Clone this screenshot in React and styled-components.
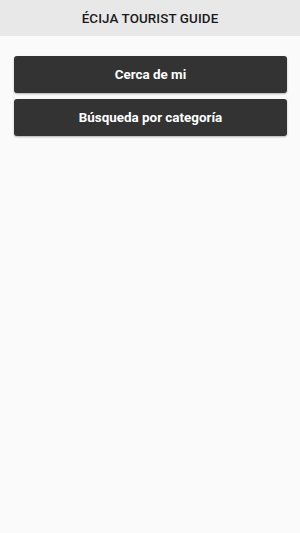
import styled, { createGlobalStyle } from "styled-components";

const GlobalStyle = createGlobalStyle`
  html, body {
    margin: 0;
    padding: 0;
    background: #fafafa;
    font-family: Roboto, "Liberation Sans", sans-serif;
  }
`;

const App = () => {
  return (
    <Page>
      <GlobalStyle />
      <Header>
        <Title>ÉCIJA TOURIST GUIDE</Title>
      </Header>
      <Content>
        <MenuButton>Cerca de mi</MenuButton>
        <MenuButton>Búsqueda por categoría</MenuButton>
      </Content>
    </Page>
  );
};

const Page = styled.div`
  min-height: 533px;
  background: #fafafa;
`;

const Header = styled.div`
  height: 36px;
  background: #e8e8e8;
  display: flex;
  align-items: center;
  justify-content: center;
`;

const Title = styled.h1`
  margin: 0;
  font-size: 13.4px;
  font-weight: 500;
  color: #1a1a1a;
  letter-spacing: 0.1px;
`;

const Content = styled.div`
  display: flex;
  flex-direction: column;
  gap: 6px;
  padding: 20px 13px 0 14px;
`;

const MenuButton = styled.button`
  height: 37px;
  border: none;
  border-radius: 3px;
  background: #333333;
  color: #ffffff;
  font-family: Roboto, "Liberation Sans", sans-serif;
  font-size: 13.4px;
  font-weight: 700;
  box-shadow: 0 1px 2px rgba(0, 0, 0, 0.3);
  cursor: pointer;
`;

export default App;
